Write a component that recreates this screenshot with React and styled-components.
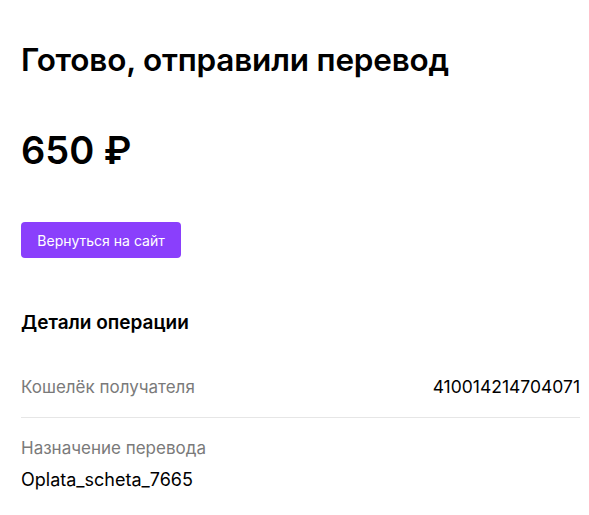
import React from "react";
import styled, { createGlobalStyle } from "styled-components";

const GlobalStyle = createGlobalStyle`
  body {
    margin: 0;
    background: #fff;
    font-family: Inter, "Noto Sans", sans-serif;
    color: #000;
  }
`;

const Page = styled.main`
  width: 559px;
  padding: 36px 0 0 21px;
  display: flex;
  flex-direction: column;
`;

const Title = styled.h1`
  font-size: 31.5px;
  line-height: 48px;
  font-weight: 600;
  margin: 0;
  letter-spacing: -0.2px;
`;

const Amount = styled.div`
  font-size: 38px;
  line-height: 48px;
  font-weight: 600;
  margin-top: 42px;
`;

const ActionButton = styled.button`
  align-self: flex-start;
  margin-top: 48px;
  width: 160px;
  height: 36px;
  border: none;
  border-radius: 4px;
  background: #8a3ffc;
  color: #fff;
  font-family: inherit;
  font-size: 14px;
  cursor: pointer;
`;

const SectionTitle = styled.h2`
  font-size: 19px;
  line-height: 24px;
  font-weight: 600;
  margin: 53px 0 22px;
`;

const Row = styled.div`
  display: flex;
  flex-direction: ${p => (p.stacked ? "column" : "row")};
  justify-content: space-between;
  align-items: ${p => (p.stacked ? "flex-start" : "center")};
  gap: ${p => (p.stacked ? "10px" : "0")};
  padding: 19px 0;
  border-bottom: ${p => (p.last ? "none" : "1px solid #e6e6e6")};
`;

const Label = styled.span`
  font-size: 17px;
  line-height: 22px;
  color: #7a7a7a;
`;

const Value = styled.span`
  font-size: ${p => (p.numeric ? "17.5px" : "18px")};
  line-height: 22px;
  color: #000;
`;

const details = [
  { label: "Кошелёк получателя", value: "410014214704071", numeric: true },
  { label: "Назначение перевода", value: "Oplata_scheta_7665", stacked: true },
];

export default function App() {
  return (
    <>
      <GlobalStyle />
      <Page>
        <Title>Готово, отправили перевод</Title>
        <Amount>650 ₽</Amount>
        <ActionButton>Вернуться на сайт</ActionButton>
        <SectionTitle>Детали операции</SectionTitle>
        {details.map((d, i) => (
          <Row key={d.label} stacked={d.stacked} last={i === details.length - 1}>
            <Label>{d.label}</Label>
            <Value numeric={d.numeric}>{d.value}</Value>
          </Row>
        ))}
      </Page>
    </>
  );
}
